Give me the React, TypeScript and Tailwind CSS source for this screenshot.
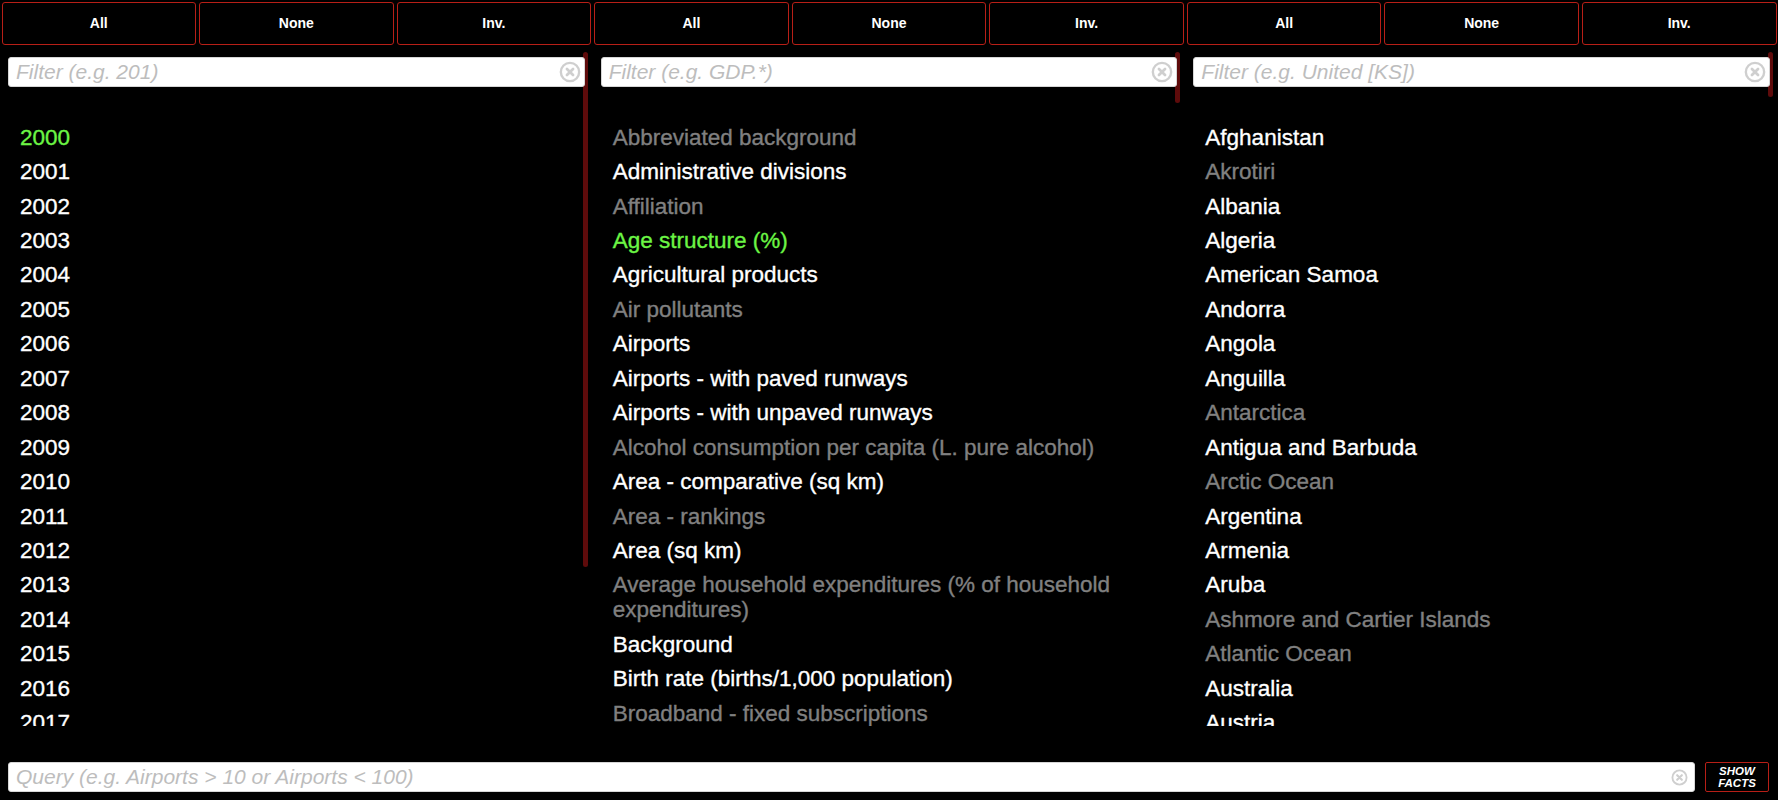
import React from "react";

type Item = { label: string; tone: "on" | "off" | "sel" };

const years: Item[] = Array.from({ length: 18 }, (_, i) => ({
  label: String(2000 + i),
  tone: i === 0 ? "sel" : "on",
}));

const fields: Item[] = [
  { label: "Abbreviated background", tone: "off" },
  { label: "Administrative divisions", tone: "on" },
  { label: "Affiliation", tone: "off" },
  { label: "Age structure (%)", tone: "sel" },
  { label: "Agricultural products", tone: "on" },
  { label: "Air pollutants", tone: "off" },
  { label: "Airports", tone: "on" },
  { label: "Airports - with paved runways", tone: "on" },
  { label: "Airports - with unpaved runways", tone: "on" },
  { label: "Alcohol consumption per capita (L. pure alcohol)", tone: "off" },
  { label: "Area - comparative (sq km)", tone: "on" },
  { label: "Area - rankings", tone: "off" },
  { label: "Area (sq km)", tone: "on" },
  { label: "Average household expenditures (% of household expenditures)", tone: "off" },
  { label: "Background", tone: "on" },
  { label: "Birth rate (births/1,000 population)", tone: "on" },
  { label: "Broadband - fixed subscriptions", tone: "off" },
];

const countries: Item[] = [
  { label: "Afghanistan", tone: "on" },
  { label: "Akrotiri", tone: "off" },
  { label: "Albania", tone: "on" },
  { label: "Algeria", tone: "on" },
  { label: "American Samoa", tone: "on" },
  { label: "Andorra", tone: "on" },
  { label: "Angola", tone: "on" },
  { label: "Anguilla", tone: "on" },
  { label: "Antarctica", tone: "off" },
  { label: "Antigua and Barbuda", tone: "on" },
  { label: "Arctic Ocean", tone: "off" },
  { label: "Argentina", tone: "on" },
  { label: "Armenia", tone: "on" },
  { label: "Aruba", tone: "on" },
  { label: "Ashmore and Cartier Islands", tone: "off" },
  { label: "Atlantic Ocean", tone: "off" },
  { label: "Australia", tone: "on" },
  { label: "Austria", tone: "on" },
];

const toneClass = {
  on: "text-white",
  off: "text-[#808080]",
  sel: "text-[#6cf545]",
};

const ClearIcon = ({ size }: { size: number }) => (
  <svg width={size} height={size} viewBox="0 0 24 24" fill="none" stroke="#cfcfcf">
    <circle cx="12" cy="12" r="10" strokeWidth="2.6" />
    <path d="M8.7 8.7l6.6 6.6M15.3 8.7l-6.6 6.6" strokeWidth="3" strokeLinecap="round" />
  </svg>
);

const Column = ({
  placeholder,
  items,
  thumb,
}: {
  placeholder: string;
  items: Item[];
  thumb: string;
}) => (
  <div className="flex min-h-0 flex-col">
    <div className="mt-[2px] grid grid-cols-3">
      {["All", "None", "Inv."].map((l) => (
        <button
          key={l}
          className="mx-[1.5px] h-[43px] rounded-[3px] border-[1.5px] border-[#b81f17] bg-black text-[14px] font-bold text-white"
        >
          {l}
        </button>
      ))}
    </div>
    <div className="relative mt-[7px] flex min-h-0 flex-1">
      <div className="min-w-0 flex-1 overflow-hidden">
        <ul className="pl-5 pr-4 pt-[68px]">
          {items.map((it) => (
            <li
              key={it.label}
              className={
                "py-[4.72px] text-[22.5px] leading-[25px] [-webkit-text-stroke-width:0.35px] " +
                toneClass[it.tone]
              }
            >
              {it.label}
            </li>
          ))}
        </ul>
      </div>
      {/* scrollbar */}
      <div className="mr-[5px] w-[5px]">
        <div className={"rounded-full bg-[#5e0b0b] " + thumb} />
      </div>
      <div className="absolute left-2 right-2 top-[4.7px] h-[30px]">
        <input
          placeholder={placeholder}
          className="h-full w-full rounded-[3px] border border-[#d6d6d6] bg-white pl-[7px] pr-8 text-[21px] text-black outline-none placeholder:italic placeholder:text-[#bdbdbd]"
        />
        <span className="absolute right-[4px] top-[4px]">
          <ClearIcon size={22} />
        </span>
      </div>
    </div>
  </div>
);

export default function App() {
  return (
    <div className="flex h-[800px] flex-col overflow-hidden bg-black font-['Liberation_Sans',Arial,sans-serif]">
      <div className="grid min-h-0 flex-1 grid-cols-3">
        <Column placeholder="Filter (e.g. 201)" items={years} thumb="h-[515px]" />
        <Column placeholder="Filter (e.g. GDP.*)" items={fields} thumb="h-[51px]" />
        <Column placeholder="Filter (e.g. United [KS])" items={countries} thumb="h-[45px]" />
      </div>
      <div className="mb-2 mt-[36px] flex h-[30px] gap-[10px] px-2">
        <div className="relative flex-1">
          <input
            placeholder="Query (e.g. Airports > 10 or Airports < 100)"
            className="h-full w-full rounded-[3px] border border-[#d6d6d6] bg-white pl-[7px] pr-8 text-[21px] text-black outline-none placeholder:italic placeholder:text-[#bdbdbd]"
          />
          <span className="absolute right-[7px] top-[6.5px]">
            <ClearIcon size={17} />
          </span>
        </div>
        <button className="mr-[1px] flex w-[64px] flex-col items-center justify-center rounded-[2px] border-[1.5px] border-[#b81f17] text-[11.5px] font-bold italic leading-[12px] text-white">
          <span>SHOW</span>
          <span>FACTS</span>
        </button>
      </div>
    </div>
  );
}
